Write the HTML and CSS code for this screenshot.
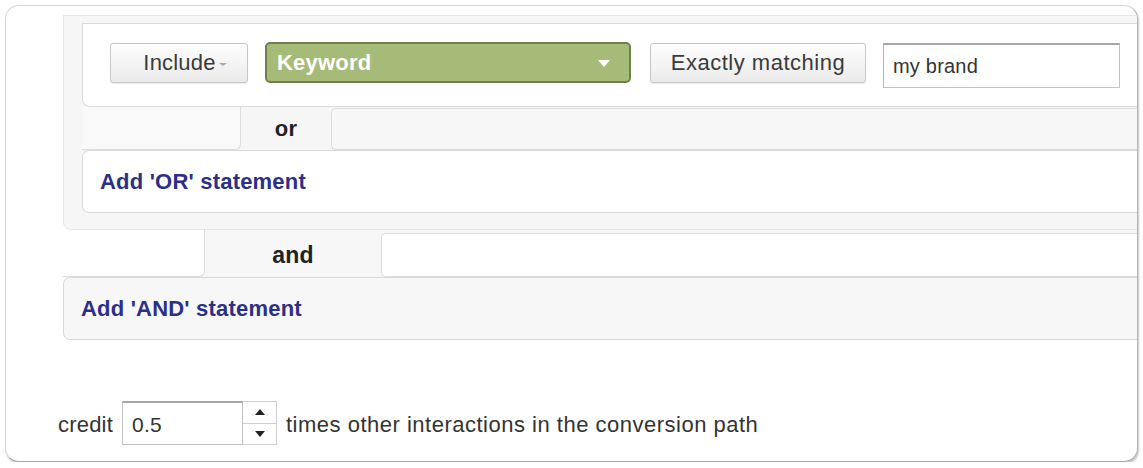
FILE: index.html
```html
<!DOCTYPE html>
<html>
<head>
<meta charset="utf-8">
<link rel="stylesheet" href="styles.css">
</head>
<body>
<div class="card">
  <div class="builder">
    <div class="and-group">
      <div class="cond-box">
        <div class="cond-row">
          <div class="btn btn-include">Include<span class="caret"></span></div>
          <div class="select-green">
            <span class="select-text">Keyword</span>
            <svg class="select-arrow" width="12" height="7" viewBox="0 0 12 7"><path d="M0 0 H12 L6 7 Z" fill="#fff"/></svg>
          </div>
          <div class="btn btn-match">Exactly matching</div>
          <div class="text-input">my brand</div>
        </div>
      </div>
      <div class="sep-row sep-or">
        <div class="seg-left seg-left-or"></div>
        <div class="sep-label sep-label-or">or</div>
        <div class="seg-right seg-right-or"></div>
      </div>
      <div class="add-box add-or"><span class="add-link">Add 'OR' statement</span></div>
    </div>
    <div class="sep-row sep-and">
      <div class="seg-left seg-left-and"></div>
      <div class="sep-label sep-label-and">and</div>
      <div class="seg-right seg-right-and"></div>
    </div>
    <div class="add-box add-and"><span class="add-link">Add 'AND' statement</span></div>
  </div>
  <div class="credit-row">
    <span class="credit-label">credit</span>
    <div class="num-input">
      <div class="num-field">0.5</div>
      <div class="spinner">
        <div class="spin-btn spin-up"><svg width="10" height="6" viewBox="0 0 10 6"><path d="M0 6 L5 0 L10 6 Z" fill="#222"/></svg></div>
        <div class="spin-btn spin-down"><svg width="10" height="6" viewBox="0 0 10 6"><path d="M0 0 L10 0 L5 6 Z" fill="#222"/></svg></div>
      </div>
    </div>
    <span class="credit-text">times other interactions in the conversion path</span>
  </div>
</div>
</body>
</html>
```

FILE: styles.css
```css
* { box-sizing: border-box; }
html, body { margin: 0; padding: 0; background: #fff; }
body {
  font-family: "Liberation Sans", Arial, sans-serif;
  font-size: 22px;
  color: #333;
  letter-spacing: 0.2px;
}
.card {
  margin: 5px 0 0 5px;
  width: 1133px;
  height: 457px;
  border: 1px solid #d6d6d6;
  border-right-color: #b4b4b4;
  border-bottom-color: #a4a4a4;
  border-radius: 14px;
  box-shadow: 1px 2px 2px rgba(0,0,0,0.22);
  overflow: hidden;
  background: #fff;
}
.builder {
  margin-top: 9px;
  padding-left: 57px;
}
.and-group {
  background: #f6f6f6;
  border: 1px solid #e6e6e6;
  border-right: none;
  border-radius: 0 0 0 8px;
  padding: 7px 0 16px 18px;
}
.cond-box {
  background: #fff;
  border: 1px solid #d9d9d9;
  border-right: none;
  border-radius: 0 0 0 8px;
  height: 84px;
  padding: 19px 0 0 27px;
}
.cond-row {
  display: flex;
  align-items: flex-start;
}
.btn {
  height: 40px;
  border: 1px solid #c6c6c6;
  border-radius: 3px;
  background: linear-gradient(#fdfdfd, #ebebeb);
  box-shadow: 0 1px 1px rgba(0,0,0,0.08);
  display: flex;
  align-items: center;
  justify-content: center;
  color: #3a3a3a;
}
.btn-include {
  width: 138px;
  padding-left: 12px;
}
.caret {
  display: inline-block;
  width: 0;
  height: 0;
  margin-left: 3px;
  margin-top: 2px;
  border-left: 4px solid transparent;
  border-right: 4px solid transparent;
  border-top: 3px solid #aaa;
}
.select-green {
  margin-left: 17px;
  width: 366px;
  height: 41px;
  margin-top: -1px;
  background: #a7bb78;
  border: 2px solid #6f7f4e;
  border-radius: 5px;
  display: flex;
  align-items: center;
  justify-content: space-between;
  padding: 0 19px 0 10px;
}
.select-text {
  color: #fff;
  font-weight: bold;
}
.select-arrow { display: block; margin-top: 1px; }
.btn-match {
  margin-left: 19px;
  width: 216px;
  letter-spacing: 0.5px;
}
.text-input {
  margin-left: 17px;
  width: 237px;
  height: 45px;
  border: 1px solid #c4c4c4;
  border-top: 2px solid #a6a6a6;
  border-left-color: #b4b4b4;
  background: #fff;
  display: flex;
  align-items: center;
  padding-left: 9px;
  font-size: 20px;
  color: #333;
}
.sep-row {
  display: flex;
  align-items: stretch;
}
.sep-or { height: 43px; }
.sep-and { height: 47px; background: #f7f7f7; }
.seg-left {
  border-right: 1px solid #dcdcdc;
  border-bottom: 1px solid #dcdcdc;
  border-radius: 0 0 6px 0;
}
.seg-left-or { width: 159px; background: #f9f9f9; }
.seg-left-and { width: 142px; background: #fff; }
.sep-label {
  display: flex;
  align-items: center;
  justify-content: center;
  font-weight: bold;
  color: #222;
}
.sep-label-or { width: 90px; }
.sep-label-and { width: 176px; font-size: 23px; padding-top: 3px; }
.seg-right {
  flex: 1;
  border: 1px solid #dcdcdc;
  border-right: none;
  border-radius: 5px 0 0 5px;
}
.seg-right-or { background: #f7f7f7; margin-top: 1px; }
.seg-right-and { background: #fff; margin-top: 3px; }
.add-box {
  height: 63px;
  border: 1px solid #d9d9d9;
  border-right: none;
  border-radius: 7px 0 0 7px;
  display: flex;
  align-items: center;
}
.add-or { background: #fff; padding-left: 17px; }
.add-and { background: #f7f7f7; padding-left: 17px; }
.add-link {
  color: #2c2f88;
  font-weight: bold;
}
.credit-row {
  margin-top: 61px;
  padding-left: 52px;
  display: flex;
  align-items: center;
}
.credit-label { color: #333; padding-top: 4px; }
.num-input {
  margin-left: 9px;
  display: flex;
  height: 44px;
}
.num-field {
  width: 121px;
  border: 1px solid #c0c0c0;
  border-top: 2px solid #a8a8a8;
  display: flex;
  align-items: center;
  padding-left: 9px;
  padding-top: 3px;
  font-size: 21px;
  color: #333;
}
.spinner {
  width: 34px;
  border: 1px solid #cfcfcf;
  border-left: none;
  display: flex;
  flex-direction: column;
}
.spin-btn {
  flex: 1;
  display: flex;
  align-items: center;
  justify-content: center;
  background: #fff;
}
.spin-up { border-bottom: 1px solid #cfcfcf; }
.spin-btn svg { display: block; }
.credit-text {
  margin-left: 9px;
  color: #333;
  letter-spacing: 0.5px;
  padding-top: 4px;
}
```
